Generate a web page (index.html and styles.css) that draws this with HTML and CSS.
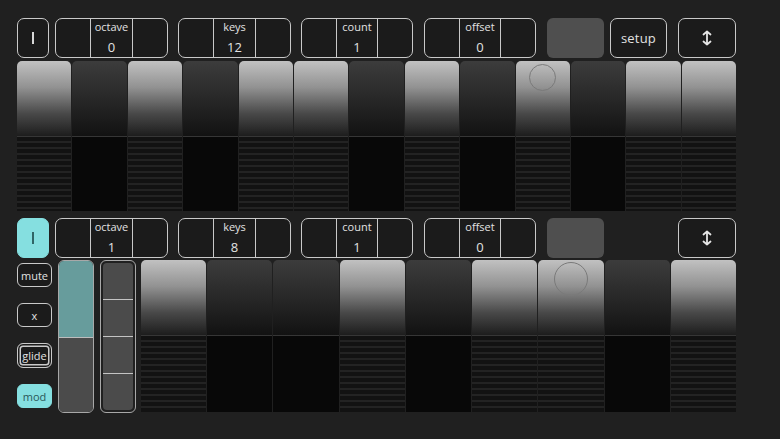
FILE: index.html
```html
<!DOCTYPE html>
<html>
<head>
<meta charset="utf-8">
<link rel="stylesheet" href="styles.css">
</head>
<body>
<div class="app">
  <section class="track">
    <div class="toolbar">
      <div class="btn bar-btn"><span class="bar"></span></div>
      <div class="stepper g6"><div class="cell"></div><div class="mid"><span class="lbl">octave</span><span class="val">0</span></div><div class="cell"></div></div>
      <div class="stepper g10"><div class="cell"></div><div class="mid"><span class="lbl">keys</span><span class="val">12</span></div><div class="cell"></div></div>
      <div class="stepper narrow g10"><div class="cell"></div><div class="mid"><span class="lbl">count</span><span class="val">1</span></div><div class="cell"></div></div>
      <div class="stepper narrow g11"><div class="cell"></div><div class="mid"><span class="lbl">offset</span><span class="val">0</span></div><div class="cell"></div></div>
      <div class="greybox g11"></div>
      <div class="btn text-btn g6">setup</div>
      <div class="btn icon-btn g11"><svg width="12" height="16" viewBox="0 0 12 16"><path d="M2.5 4.5 L6 1.5 L9.5 4.5 M6 1.5 V14.5 M2.5 11.5 L6 14.5 L9.5 11.5" fill="none" stroke="#e6e6e6" stroke-width="1.8" stroke-linecap="round" stroke-linejoin="round"/></svg></div>
    </div>
    <div class="keys keys13">
      <div class="key w"><div class="kt"></div><div class="kb"></div></div>
      <div class="key b"><div class="kt"></div><div class="kb"></div></div>
      <div class="key w"><div class="kt"></div><div class="kb"></div></div>
      <div class="key b"><div class="kt"></div><div class="kb"></div></div>
      <div class="key w"><div class="kt"></div><div class="kb"></div></div>
      <div class="key w"><div class="kt"></div><div class="kb"></div></div>
      <div class="key b"><div class="kt"></div><div class="kb"></div></div>
      <div class="key w"><div class="kt"></div><div class="kb"></div></div>
      <div class="key b"><div class="kt"></div><div class="kb"></div></div>
      <div class="key w"><div class="kt"><span class="ring ring-s"></span></div><div class="kb"></div></div>
      <div class="key b"><div class="kt"></div><div class="kb"></div></div>
      <div class="key w"><div class="kt"></div><div class="kb"></div></div>
      <div class="key w"><div class="kt"></div><div class="kb"></div></div>
    </div>
  </section>

  <section class="track track2">
    <div class="toolbar">
      <div class="btn bar-btn on"><span class="bar"></span></div>
      <div class="stepper g6"><div class="cell"></div><div class="mid"><span class="lbl">octave</span><span class="val">1</span></div><div class="cell"></div></div>
      <div class="stepper g10"><div class="cell"></div><div class="mid"><span class="lbl">keys</span><span class="val">8</span></div><div class="cell"></div></div>
      <div class="stepper narrow g10"><div class="cell"></div><div class="mid"><span class="lbl">count</span><span class="val">1</span></div><div class="cell"></div></div>
      <div class="stepper narrow g11"><div class="cell"></div><div class="mid"><span class="lbl">offset</span><span class="val">0</span></div><div class="cell"></div></div>
      <div class="greybox g11"></div>
      <div class="spacer"></div>
      <div class="btn icon-btn g11"><svg width="12" height="16" viewBox="0 0 12 16"><path d="M2.5 4.5 L6 1.5 L9.5 4.5 M6 1.5 V14.5 M2.5 11.5 L6 14.5 L9.5 11.5" fill="none" stroke="#e6e6e6" stroke-width="1.8" stroke-linecap="round" stroke-linejoin="round"/></svg></div>
    </div>
    <div class="body2">
      <div class="side">
        <div class="sbtn">mute</div>
        <div class="sbtn">x</div>
        <div class="sbtn double">glide</div>
        <div class="sbtn on">mod</div>
      </div>
      <div class="slider">
        <div class="fill"></div>
        <div class="rest"></div>
      </div>
      <div class="slider segs">
        <div class="seg"></div>
        <div class="seg"></div>
        <div class="seg"></div>
        <div class="seg"></div>
      </div>
      <div class="keys keys9">
        <div class="key w"><div class="kt"></div><div class="kb"></div></div>
        <div class="key b"><div class="kt"></div><div class="kb"></div></div>
        <div class="key b"><div class="kt"></div><div class="kb"></div></div>
        <div class="key w"><div class="kt"></div><div class="kb"></div></div>
        <div class="key b"><div class="kt"></div><div class="kb"></div></div>
        <div class="key w"><div class="kt"></div><div class="kb"></div></div>
        <div class="key w"><div class="kt"><span class="ring ring-l"></span></div><div class="kb"></div></div>
        <div class="key b"><div class="kt"></div><div class="kb"></div></div>
        <div class="key w"><div class="kt"></div><div class="kb"></div></div>
      </div>
    </div>
  </section>
</div>
</body>
</html>
```

FILE: styles.css
```css
* { box-sizing: border-box; }
html, body { margin: 0; padding: 0; }
body {
  background: #202020;
  width: 780px;
  height: 439px;
  overflow: hidden;
  font-family: "Open Sans", "Noto Sans", sans-serif;
  color: #e2e2e2;
}
.app {
  padding: 18px 0 0 17px;
}
.toolbar {
  display: flex;
  height: 40px;
}
.g6 { margin-left: 6px; }
.g10 { margin-left: 10px; }
.g11 { margin-left: 11px; }

.btn {
  border: 1.5px solid #c9c9c9;
  border-radius: 7px;
  background: #1b1b1b;
  display: flex;
  align-items: center;
  justify-content: center;
}
.bar-btn { width: 32px; }
.bar {
  display: block;
  width: 1.5px;
  height: 12px;
  background: #d8d8d8;
}
.bar-btn.on {
  background: #85dfe0;
  border-color: #85dfe0;
}
.bar-btn.on .bar { background: #2f6566; }
.text-btn {
  width: 57px;
  font-size: 13px;
  letter-spacing: 0.2px;
}
.icon-btn { width: 58px; }

.stepper {
  width: 113px;
  display: flex;
  border: 1.5px solid #c9c9c9;
  border-radius: 7px;
  background: #1b1b1b;
  overflow: hidden;
}
.stepper.narrow { width: 112px; }
.cell { width: 34px; }
.mid {
  flex: 1;
  border-left: 1.5px solid #c9c9c9;
  border-right: 1.5px solid #c9c9c9;
  display: flex;
  flex-direction: column;
  align-items: center;
  padding-top: 0;
}
.lbl { font-size: 11px; line-height: 15px; }
.val { font-size: 13px; line-height: 15px; margin-top: 6px; }

.greybox {
  width: 57px;
  background: #4f4f4f;
  border-radius: 6px;
}
.spacer { width: 57px; margin-left: 6px; }

.keys {
  display: flex;
  gap: 1px;
}
.keys13 {
  width: 719px;
  margin-top: 3px;
}
.key {
  flex: 1;
  display: flex;
  flex-direction: column;
}
.kt {
  position: relative;
  height: 76px;
  border-radius: 5px 5px 0 0;
  border-bottom: 1px solid #363636;
}
.key.w .kt {
  background: linear-gradient(to bottom, #c1c1c1 0%, #929292 35%, #494949 70%, #1d1d1d 100%);
}
.key.b .kt {
  background: linear-gradient(to bottom, #3c3c3c 0%, #2a2a2a 45%, #121212 100%);
}
.kb {
  height: 74px;
}
.key.w .kb {
  background:
    repeating-linear-gradient(to bottom, #121212 0px, #121212 4px, #232323 4px, #232323 6px);
  margin-bottom: 3px;
}
.key.b .kb {
  background: #080808;
}

.ring {
  position: absolute;
  left: 50%;
  border: 1.5px solid #7a7a7a;
  border-radius: 50%;
}
.ring-s {
  width: 27px;
  height: 27px;
  top: 3px;
  margin-left: -13.5px;
}
.ring-l {
  width: 34px;
  height: 34px;
  top: 2px;
  margin-left: -17px;
}

.track2 { margin-top: 4px; }
.body2 {
  display: flex;
  margin-top: 2px;
  height: 153px;
}
.side {
  width: 35px;
  display: flex;
  flex-direction: column;
  gap: 16px;
  padding-top: 3px;
}
.sbtn {
  height: 24px;
  border: 1.5px solid #c9c9c9;
  border-radius: 6px;
  font-size: 11px;
  display: flex;
  align-items: center;
  justify-content: center;
  background: #1b1b1b;
}
.sbtn.double {
  box-shadow: inset 0 0 0 1.5px #1b1b1b, inset 0 0 0 3px #c9c9c9;
  height: 25px;
}
.sbtn.on {
  background: #85dfe0;
  border-color: #85dfe0;
  color: #2a5859;
}
.slider {
  width: 36px;
  margin-left: 6px;
  border: 1.5px solid #a8a8a8;
  border-radius: 6px;
  overflow: hidden;
  display: flex;
  flex-direction: column;
}
.fill {
  height: 77px;
  background: #679c9c;
  border-bottom: 1.5px solid #bdbdbd;
}
.rest {
  flex: 1;
  background: #4b4b4b;
}
.slider.segs {
  padding: 2px;
  gap: 0;
}
.seg {
  flex: 1;
  background: #4b4b4b;
  border-bottom: 1.5px solid #c4c4c4;
}
.seg:first-child { border-radius: 4px 4px 0 0; }
.seg:last-child { border-bottom: none; border-radius: 0 0 4px 4px; }

.keys9 {
  width: 595px;
  margin-left: 5px;
}
.keys9 .kb { height: 76px; }
.keys9 .key.w .kb { margin-bottom: 0; }
```
